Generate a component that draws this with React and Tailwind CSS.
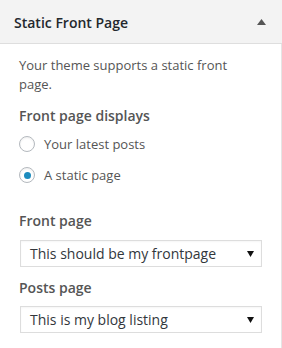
export default function App() {
  const font = { fontFamily: '"Open Sans", "Noto Sans", sans-serif' };

  const Radio = ({ checked, label }) => (
    <div className="flex items-center h-[20px]">
      <span className="w-[16px] h-[16px] rounded-full border border-[#b4b9be] bg-white shadow-[inset_0_1px_2px_rgba(0,0,0,0.07)] flex items-center justify-center">
        {checked && <span className="w-[7px] h-[7px] rounded-full bg-[#1e8cbe]" />}
      </span>
      <span className="ml-[9px] text-[13px] leading-[20px] text-[#555]">{label}</span>
    </div>
  );

  const Select = ({ value }) => (
    <div className="ml-[1px] w-[242px] h-[27px] border border-[#ddd] bg-white flex items-center justify-between pl-[9px] pr-[7px] shadow-[inset_0_1px_2px_rgba(0,0,0,0.04)]">
      <span className="text-[14px] leading-[20px] text-[#32373c]">{value}</span>
      <svg width="7" height="6" viewBox="0 0 7 6">
        <path d="M0 0 H7 L3.5 6 Z" fill="#111" />
      </svg>
    </div>
  );

  return (
    <div className="w-[282px] h-[348px] bg-white overflow-hidden" style={font}>
      <div className="h-[44px] bg-[#f3f3f3] border-b border-[#dedede] flex items-center justify-between pl-[14px] pr-[16px] pt-[1px]">
        <span className="text-[14px] font-semibold text-[#23282d]">Static Front Page</span>
        <svg width="9" height="6" viewBox="0 0 9 6">
          <path d="M0 6 L4.5 0 L9 6 Z" fill="#555" />
        </svg>
      </div>
      <div className="h-[304px] border-r border-[#e5e5e5] pl-[19px] pt-[12px]">
        <p className="text-[13px] leading-[19px] text-[#555] w-[230px]">
          Your theme supports a static front page.
        </p>
        <div className="mt-[12px] text-[14px] leading-[20px] font-semibold text-[#555]">Front page displays</div>
        <div className="mt-[8px] flex flex-col gap-[11px]">
          <Radio label="Your latest posts" />
          <Radio checked label="A static page" />
        </div>
        <div className="mt-[26px] text-[14px] leading-[20px] font-semibold text-[#555]">Front page</div>
        <div className="mt-[9px]">
          <Select value="This should be my frontpage" />
        </div>
        <div className="mt-[11px] text-[14px] leading-[20px] font-semibold text-[#555]">Posts page</div>
        <div className="mt-[8px]">
          <Select value="This is my blog listing" />
        </div>
      </div>
    </div>
  );
}
